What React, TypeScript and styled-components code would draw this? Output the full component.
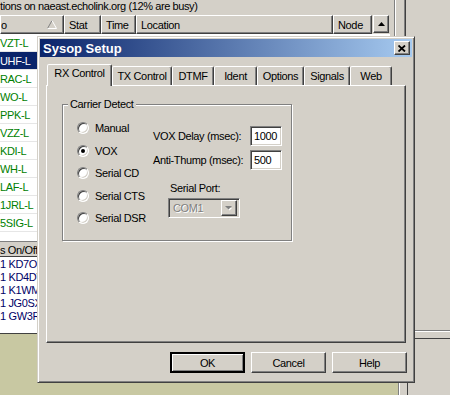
import React from 'react';
import styled, { createGlobalStyle } from 'styled-components';

const face = '#d4d0c8';
const shadow = '#808080';
const dark = '#404040';

const GlobalStyle = createGlobalStyle`
  html, body {
    margin: 0;
    padding: 0;
  }
  body {
    width: 450px;
    height: 395px;
    overflow: hidden;
    background: ${face};
    font-family: "Liberation Sans", Arial, sans-serif;
    font-size: 11px;
    letter-spacing: -0.35px;
    color: #000;
  }
`;

const Screen = styled.div`
  position: relative;
  display: flex;
  width: 450px;
  height: 395px;
  overflow: hidden;
  background: ${face};
`;

const MainPane = styled.div`
  display: flex;
  flex-direction: column;
  width: 390px;
`;

const StatusLine = styled.div`
  height: 15px;
  line-height: 13px;
  white-space: nowrap;
  letter-spacing: -0.4px;
`;

const HeaderRow = styled.div`
  display: flex;
  height: 19px;
`;

const HeaderCell = styled.div<{ $w: number }>`
  box-sizing: border-box;
  width: ${(p) => p.$w}px;
  height: 19px;
  border: 1px solid;
  border-color: #fff ${dark} ${dark} #fff;
  box-shadow: inset -1px -1px ${shadow};
  display: flex;
  align-items: center;
  justify-content: space-between;
  padding: 0 6px 0 4px;
  white-space: nowrap;
  overflow: hidden;
`;

const ScrollUp = styled.div`
  box-sizing: border-box;
  width: 16px;
  height: 18px;
  margin-left: 1px;
  border: 1px solid;
  border-color: #fff ${dark} ${dark} #fff;
  box-shadow: inset -1px -1px ${shadow};
  display: flex;
  align-items: center;
  justify-content: center;
`;

const ListBody = styled.div`
  height: 207px;
  background: #fff;
  overflow: hidden;
`;

const CallRow = styled.div<{ $selected?: boolean }>`
  box-sizing: border-box;
  width: 64px;
  height: 18px;
  border-bottom: 1px solid #e6e6e6;
  display: flex;
  align-items: center;
  white-space: nowrap;
  background: ${(p) => (p.$selected ? '#0a246a' : '#fff')};
  color: ${(p) => (p.$selected ? '#fff' : '#008000')};
`;

const Divider = styled.div`
  height: 2px;
  border-top: 1px solid ${shadow};
`;

const SubHeader = styled.div`
  box-sizing: border-box;
  height: 13px;
  line-height: 12px;
  border-bottom: 1px solid ${dark};
  white-space: nowrap;
`;

const SubBody = styled.div`
  box-sizing: border-box;
  height: 77px;
  padding-top: 1px;
  background: #fff;
  border-bottom: 1px solid ${dark};
`;

const NodeRow = styled.div`
  height: 13px;
  line-height: 13px;
  white-space: nowrap;
  color: #000066;
`;

const Desktop = styled.div`
  flex: 1;
  margin-right: -8px;
  background: #c8c8a2;
`;

const RightPane = styled.div`
  flex: 1;
  display: flex;
  flex-direction: column;
  padding-left: 4px;
`;

const UpperSplit = styled.div`
  box-sizing: border-box;
  flex: 0 0 330px;
  width: 12px;
  border-left: 1px solid ${shadow};
  border-right: 1px solid ${dark};
  box-shadow: inset 1px 0 #fff, inset -1px 0 ${shadow};
`;

const SplitBand = styled.div`
  box-sizing: border-box;
  height: 9px;
  border-top: 1px solid ${shadow};
  border-bottom: 1px solid ${dark};
  box-shadow: inset 0 1px #fff;
`;

const LowerSplit = styled.div`
  box-sizing: border-box;
  flex: 1;
  width: 10px;
  margin-left: 4px;
  border-left: 1px solid ${shadow};
  border-right: 1px solid ${dark};
  box-shadow: inset 1px 0 #fff;
`;

const Dialog = styled.div`
  position: absolute;
  left: 37px;
  top: 36px;
  width: 378px;
  height: 347px;
  box-sizing: border-box;
  border: 1px solid;
  border-color: ${face} ${dark} ${dark} ${face};
  box-shadow: inset 1px 1px #fff, inset -1px -1px ${shadow};
  padding: 2px;
  background: ${face};
  display: flex;
  flex-direction: column;
`;

const TitleBar = styled.div`
  height: 18px;
  display: flex;
  align-items: center;
  justify-content: space-between;
  padding: 0 2px 0 3px;
  background: linear-gradient(to right, #0a246a, #a6caf0);
  color: #fff;
  font-weight: bold;
  font-size: 13px;
  letter-spacing: 0;
`;

const Raised = styled.div`
  box-sizing: border-box;
  border: 1px solid;
  border-color: #fff ${dark} ${dark} #fff;
  box-shadow: inset -1px -1px ${shadow};
  background: ${face};
  display: flex;
  align-items: center;
  justify-content: center;
`;

const CloseButton = styled(Raised)`
  width: 16px;
  height: 14px;
`;

const DialogBody = styled.div`
  flex: 1;
  display: flex;
  flex-direction: column;
  padding: 7px 6px 0;
`;

const TabRow = styled.div`
  display: flex;
  align-items: flex-end;
  height: 21px;
  padding-left: 1px;
`;

const Tab = styled.div<{ $w: number; $active?: boolean }>`
  position: relative;
  z-index: ${(p) => (p.$active ? 2 : 1)};
  box-sizing: border-box;
  width: ${(p) => p.$w}px;
  height: ${(p) => (p.$active ? 22 : 19)}px;
  margin-bottom: ${(p) => (p.$active ? -1 : 0)}px;
  border: 1px solid;
  border-bottom: none;
  border-color: #fff ${dark} transparent #fff;
  border-radius: 2px 2px 0 0;
  box-shadow: inset -1px 0 ${shadow};
  background: ${face};
  text-align: center;
  line-height: 13px;
  padding-top: ${(p) => (p.$active ? 2 : 3)}px;
  white-space: nowrap;
`;

const TabPanel = styled.div`
  box-sizing: border-box;
  height: 258px;
  border: 1px solid;
  border-color: #fff ${dark} ${dark} #fff;
  box-shadow: inset -1px -1px ${shadow};
  padding: 18px 15px;
`;

const GroupBox = styled.div`
  position: relative;
  box-sizing: border-box;
  width: 230px;
  height: 137px;
  border: 1px solid ${shadow};
  box-shadow: inset 1px 1px #fff, 1px 1px #fff;
  display: flex;
  padding: 12px 0 0 14px;
`;

const Legend = styled.span`
  position: absolute;
  top: -7px;
  left: 5px;
  padding: 0 2px;
  line-height: 13px;
  background: ${face};
`;

const RadioColumn = styled.div`
  width: 76px;
  display: flex;
  flex-direction: column;
`;

const RadioRow = styled.label`
  height: 22.5px;
  display: flex;
  align-items: center;
  gap: 6px;
  white-space: nowrap;
`;

const RadioDot = styled.span<{ $checked?: boolean }>`
  box-sizing: border-box;
  width: 12px;
  height: 12px;
  border-radius: 50%;
  border: 1px solid;
  border-color: ${shadow} #fff #fff ${shadow};
  box-shadow: inset 1px 1px ${dark}, inset -1px -1px ${face};
  background: #fff;
  display: flex;
  align-items: center;
  justify-content: center;

  &::after {
    content: '';
    width: 4px;
    height: 4px;
    border-radius: 50%;
    background: ${(p) => (p.$checked ? '#000' : 'transparent')};
  }
`;

const RightColumn = styled.div`
  display: flex;
  flex-direction: column;
  padding-top: 9px;
`;

const FieldRow = styled.div`
  display: grid;
  grid-template-columns: 97px 32px;
  align-items: center;
  height: 20px;
  margin-bottom: 4px;
  white-space: nowrap;
`;

const Sunken = styled.div`
  box-sizing: border-box;
  height: 20px;
  border: 1px solid;
  border-color: ${shadow} #fff #fff ${shadow};
  box-shadow: inset 1px 1px ${dark}, inset -1px -1px ${face};
  display: flex;
  align-items: center;
`;

const TextInput = styled(Sunken)`
  background: #fff;
  padding-left: 3px;
`;

const PortLabel = styled.div`
  margin-top: 8px;
  padding-left: 17px;
  line-height: 13px;
`;

const Combo = styled(Sunken)`
  width: 72px;
  margin: 3px 0 0 15px;
  padding: 2px 2px 2px 4px;
  justify-content: space-between;
  background: ${face};
  color: ${shadow};
  text-shadow: 1px 1px #fff;
`;

const ComboButton = styled(Raised)`
  width: 16px;
  height: 16px;
`;

const ButtonRow = styled.div`
  display: flex;
  justify-content: flex-end;
  gap: 6px;
  margin: 9px -1px 0 0;
`;

const PushButton = styled(Raised)<{ $default?: boolean }>`
  width: 75px;
  height: 21px;
  ${(p) =>
    p.$default &&
    `
    border: 2px solid;
    border-color: #000;
    box-shadow: inset 1px 1px #fff, inset -1px -1px ${shadow};
  `}
`;

const calls = ['VZT-L', 'UHF-L', 'RAC-L', 'WO-L', 'PPK-L', 'VZZ-L', 'KDI-L', 'WH-L', 'LAF-L', '1JRL-L', '5SIG-L'];
const nodes = ['1 KD7OFB', '1 KD4DVN', '1 K1WMS', '1 JG0SXC', '1 GW3RWX'];
const tabs = [
  { label: 'RX Control', w: 65, active: true },
  { label: 'TX Control', w: 60 },
  { label: 'DTMF', w: 42 },
  { label: 'Ident', w: 43 },
  { label: 'Options', w: 47 },
  { label: 'Signals', w: 46 },
  { label: 'Web', w: 42 },
];
const modes = ['Manual', 'VOX', 'Serial CD', 'Serial CTS', 'Serial DSR'];

const SortArrow = () => (
  <svg width="10" height="9" viewBox="0 0 10 9">
    <path d="M5 0.5 L0.5 8.5" stroke={shadow} fill="none" />
    <path d="M5 0.5 L9.5 8.5 L0.5 8.5" stroke="#fff" fill="none" />
  </svg>
);

const UpArrow = ({ color = '#000' }: { color?: string }) => (
  <svg width="7" height="4" viewBox="0 0 7 4">
    <path d="M3.5 0 L7 4 L0 4 Z" fill={color} />
  </svg>
);

const DownArrow = () => (
  <svg width="8" height="5" viewBox="0 0 8 5">
    <path d="M1 1 L6 1 L3.5 3.5 Z" fill="#fff" transform="translate(1 1)" />
    <path d="M0 0 L7 0 L3.5 3.5 Z" fill={shadow} />
  </svg>
);

const CloseGlyph = () => (
  <svg width="8" height="7" viewBox="0 0 8 7">
    <path d="M0.5 0.5 L7 6.5 M7 0.5 L0.5 6.5" stroke="#000" strokeWidth="1.8" />
  </svg>
);

export default function App() {
  return (
    <>
      <GlobalStyle />
      <Screen>
        <MainPane>
          <StatusLine>tions on naeast.echolink.org (12% are busy)</StatusLine>
          <HeaderRow>
            <HeaderCell $w={64} style={{ paddingLeft: 0 }}>
              <span>o</span>
              <SortArrow />
            </HeaderCell>
            <HeaderCell $w={37}>Stat</HeaderCell>
            <HeaderCell $w={35}>Time</HeaderCell>
            <HeaderCell $w={197}>Location</HeaderCell>
            <HeaderCell $w={39}>Node</HeaderCell>
            <ScrollUp>
              <UpArrow />
            </ScrollUp>
          </HeaderRow>
          <ListBody>
            {calls.map((c, i) => (
              <CallRow key={c} $selected={i === 1}>
                {c}
              </CallRow>
            ))}
          </ListBody>
          <Divider />
          <SubHeader>s On/Off</SubHeader>
          <SubBody>
            {nodes.map((n) => (
              <NodeRow key={n}>{n}</NodeRow>
            ))}
          </SubBody>
          <Desktop />
        </MainPane>
        <RightPane>
          <UpperSplit />
          <SplitBand />
          <LowerSplit />
        </RightPane>

        <Dialog>
          <TitleBar>
            <span>Sysop Setup</span>
            <CloseButton>
              <CloseGlyph />
            </CloseButton>
          </TitleBar>
          <DialogBody>
            <TabRow>
              {tabs.map((t) => (
                <Tab key={t.label} $w={t.w} $active={t.active}>
                  {t.label}
                </Tab>
              ))}
            </TabRow>
            <TabPanel>
              <GroupBox>
                <Legend>Carrier Detect</Legend>
                <RadioColumn>
                  {modes.map((m) => (
                    <RadioRow key={m}>
                      <RadioDot $checked={m === 'VOX'} />
                      {m}
                    </RadioRow>
                  ))}
                </RadioColumn>
                <RightColumn>
                  <FieldRow>
                    <span>VOX Delay (msec):</span>
                    <TextInput>1000</TextInput>
                  </FieldRow>
                  <FieldRow>
                    <span>Anti-Thump (msec):</span>
                    <TextInput>500</TextInput>
                  </FieldRow>
                  <PortLabel>Serial Port:</PortLabel>
                  <Combo>
                    <span>COM1</span>
                    <ComboButton>
                      <DownArrow />
                    </ComboButton>
                  </Combo>
                </RightColumn>
              </GroupBox>
            </TabPanel>
            <ButtonRow>
              <PushButton $default>OK</PushButton>
              <PushButton>Cancel</PushButton>
              <PushButton>Help</PushButton>
            </ButtonRow>
          </DialogBody>
        </Dialog>
      </Screen>
    </>
  );
}
